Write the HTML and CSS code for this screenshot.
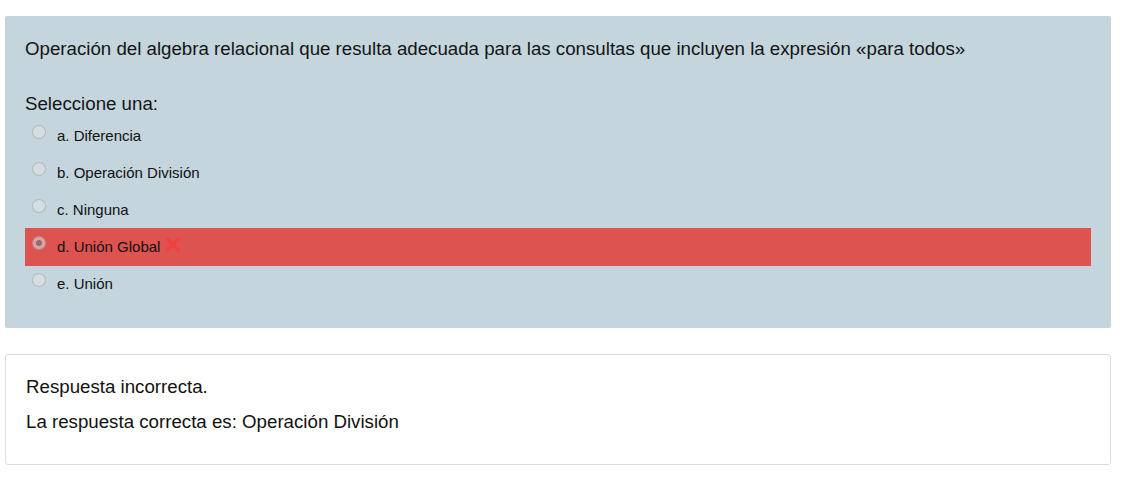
FILE: index.html
```html
<!DOCTYPE html>
<html lang="es">
<head>
<meta charset="utf-8">
<title>Pregunta</title>
<link rel="stylesheet" href="styles.css">
</head>
<body>
<div class="page">
  <div class="question">
    <p class="qtext">Operación del algebra relacional que resulta adecuada para las consultas que incluyen la expresión «para todos»</p>
    <p class="prompt">Seleccione una:</p>
    <div class="answers">
      <div class="opt"><span class="radio"></span><span class="label">a. Diferencia</span></div>
      <div class="opt"><span class="radio"></span><span class="label">b. Operación División</span></div>
      <div class="opt"><span class="radio"></span><span class="label">c. Ninguna</span></div>
      <div class="opt incorrect"><span class="radio checked"></span><span class="label">d. Unión Global</span>
        <svg class="xicon" width="16" height="15" viewBox="0 0 16 15"><path d="M2.5 2 L13.5 13 M13.5 2 L2.5 13" stroke="#f23f3f" stroke-width="3.4" stroke-linecap="round"/></svg>
      </div>
      <div class="opt"><span class="radio"></span><span class="label">e. Unión</span></div>
    </div>
  </div>
  <div class="feedback">
    <p class="fline">Respuesta incorrecta.</p>
    <p class="fline">La respuesta correcta es: Operación División</p>
  </div>
</div>
</body>
</html>
```
FILE: styles.css
```css
html, body {
  margin: 0;
  padding: 0;
  background: #fff;
}
body {
  font-family: "Liberation Sans", Arial, sans-serif;
  color: #1d2125;
}
.page {
  width: 1106px;
  margin: 16px 0 0 5px;
  display: flex;
  flex-direction: column;
  gap: 26px;
}
.question {
  background: #c4d5dd;
  border-radius: 2px;
  padding: 20px 20px 26px 20px;
}
.qtext {
  margin: 0;
  font-size: 18.7px;
  line-height: 25px;
  color: #141414;
}
.prompt {
  margin: 30px 0 0 0;
  font-size: 18.7px;
  line-height: 25px;
  color: #141414;
}
.answers {
  display: flex;
  flex-direction: column;
  margin-top: 1px;
}
.opt {
  display: flex;
  align-items: center;
  height: 37px;
  font-size: 15px;
  color: #111;
}
.opt.incorrect {
  background: #dc5350;
  height: 38px;
  margin: -0.5px 0;
}
.radio {
  width: 14px;
  height: 14px;
  box-sizing: border-box;
  border-radius: 50%;
  background: rgba(225,228,230,0.55);
  border: 1px solid rgba(0,0,0,0.16);
  margin: -8px 11px 0 7px;
  display: flex;
  align-items: center;
  justify-content: center;
  flex: none;
}
.radio.checked::after {
  content: "";
  width: 6px;
  height: 6px;
  border-radius: 50%;
  background: rgba(60,40,40,0.45);
}
.label {
  line-height: 20px;
}
.xicon {
  margin-left: 5px;
  margin-top: -4px;
}
.feedback {
  border: 1px solid #dddddd;
  border-radius: 3px;
  padding: 19px 20px 30px 20px;
  display: flex;
  flex-direction: column;
  gap: 10px;
}
.fline {
  margin: 0;
  font-size: 18.7px;
  line-height: 25px;
  color: #111;
}
```
